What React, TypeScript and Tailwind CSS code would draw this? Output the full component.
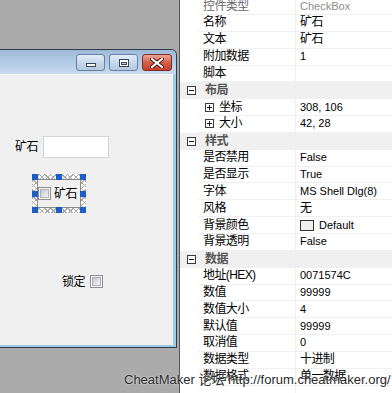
import React from "react";

type Row =
  | { kind: "cat"; label: string }
  | {
      kind: "prop";
      name: string;
      value?: string;
      sub?: boolean;
      readonly?: boolean;
      swatch?: boolean;
      cjk?: boolean;
    };

const rows: Row[] = [
  { kind: "prop", name: "控件类型", value: "CheckBox", readonly: true },
  { kind: "prop", name: "名称", value: "矿石", cjk: true },
  { kind: "prop", name: "文本", value: "矿石", cjk: true },
  { kind: "prop", name: "附加数据", value: "1" },
  { kind: "prop", name: "脚本", value: "" },
  { kind: "cat", label: "布局" },
  { kind: "prop", name: "坐标", value: "308, 106", sub: true },
  { kind: "prop", name: "大小", value: "42, 28", sub: true },
  { kind: "cat", label: "样式" },
  { kind: "prop", name: "是否禁用", value: "False" },
  { kind: "prop", name: "是否显示", value: "True" },
  { kind: "prop", name: "字体", value: "MS Shell Dlg(8)" },
  { kind: "prop", name: "风格", value: "无", cjk: true },
  { kind: "prop", name: "背景颜色", value: "Default", swatch: true },
  { kind: "prop", name: "背景透明", value: "False" },
  { kind: "cat", label: "数据" },
  { kind: "prop", name: "地址(HEX)", value: "0071574C" },
  { kind: "prop", name: "数值", value: "99999" },
  { kind: "prop", name: "数值大小", value: "4" },
  { kind: "prop", name: "默认值", value: "99999" },
  { kind: "prop", name: "取消值", value: "0" },
  { kind: "prop", name: "数据类型", value: "十进制", cjk: true },
  { kind: "prop", name: "数据格式", value: "单一数据", cjk: true },
  { kind: "prop", name: "", value: "" },
];

const FONT = { fontFamily: '"Liberation Sans", "Noto Sans CJK SC", sans-serif' };

function BoxIcon({ plus }: { plus?: boolean }) {
  return (
    <svg width="9" height="9" viewBox="0 0 9 9" className="shrink-0">
      <rect x="0.5" y="0.5" width="8" height="8" fill="#fff" stroke="#3a3a3a" />
      <line x1="2" y1="4.5" x2="7" y2="4.5" stroke="#1a1a1a" />
      {plus && <line x1="4.5" y1="2" x2="4.5" y2="7" stroke="#1a1a1a" />}
    </svg>
  );
}

function Win7Check() {
  return (
    <div className="w-[13px] h-[13px] border border-[#8e8f8f] bg-[#f6f6f6] p-[1px] shrink-0">
      <div className="w-full h-full border border-[#aeb2bb] bg-gradient-to-br from-[#c2c6d1] via-[#dcdee3] to-[#f6f6f6]" />
    </div>
  );
}

function PropRow({ r }: { r: Row }) {
  if (r.kind === "cat") {
    return (
      <div className="flex h-[16.85px] items-center bg-[#f0f0f0]">
        <div className="w-[18px] shrink-0 flex items-center pl-[7px]">
          <BoxIcon />
        </div>
        <div className="pl-[7px] text-[12px] font-bold text-[#555555] tracking-[-0.4px] leading-[15px]">
          {r.label}
        </div>
      </div>
    );
  }
  return (
    <div className="flex h-[16.85px]">
      <div className="w-[18px] shrink-0 bg-white" />
      <div
        className={`w-[98px] shrink-0 flex items-center border-b border-r border-[#f0f0f0] ${
          r.sub ? "pl-[7px]" : "pl-[5px]"
        } text-[12px] leading-[15px] tracking-[-0.6px] whitespace-nowrap overflow-hidden ${
          r.readonly ? "text-[#6a6a6a]" : "text-black"
        }`}
      >
        {r.sub && (
          <span className="mr-[5px] flex">
            <BoxIcon plus />
          </span>
        )}
        {r.name}
      </div>
      <div
        className={`flex-1 flex items-center border-b border-[#f0f0f0] pl-[4px] leading-[15px] whitespace-nowrap overflow-hidden ${
          r.cjk ? "text-[12px] tracking-[-0.6px]" : "text-[11px]"
        } ${r.readonly ? "text-[#8c8c8c]" : "text-black"}`}
      >
        {r.swatch && (
          <span className="w-[14px] h-[11px] border border-[#333] bg-[#f0f0f0] mr-[5px] shrink-0" />
        )}
        {r.value}
      </div>
    </div>
  );
}

function TitleButtons() {
  return (
    <div className="h-[24px] flex justify-end items-start pt-[4px] pr-[4px] gap-[4px] shrink-0 bg-gradient-to-b from-[#9fb9d7] via-[#b3cbe5] to-[#c8daee]">
      <div className="w-[29px] h-[17px] rounded-[3px] border border-[#62809f] bg-gradient-to-b from-[#e4edf8] via-[#c9d8ea] to-[#b4c8df] flex items-end justify-center pb-[3px]">
        <div className="w-[10px] h-[4px] bg-white border border-[#34475c]" />
      </div>
      <div className="w-[29px] h-[17px] rounded-[3px] border border-[#62809f] bg-gradient-to-b from-[#e4edf8] via-[#c9d8ea] to-[#b4c8df] flex items-center justify-center">
        <svg width="10" height="8" viewBox="0 0 10 8">
          <rect x="0.5" y="0.5" width="9" height="7" fill="#fff" stroke="#34475c" />
          <rect x="2.5" y="3.5" width="5" height="2" fill="#c9d8ea" stroke="#34475c" />
        </svg>
      </div>
      <div className="w-[30px] h-[17px] rounded-[3px] border border-[#7c2f22] bg-gradient-to-b from-[#eaa796] via-[#d45f48] to-[#c4402c] flex items-center justify-center">
        <svg width="14" height="10" viewBox="0 0 14 10">
          <path d="M2 1 L12 9 M12 1 L2 9" stroke="#4a1a10" strokeWidth="4" strokeLinecap="square" />
          <path d="M2 1 L12 9 M12 1 L2 9" stroke="#fff" strokeWidth="2" strokeLinecap="square" />
        </svg>
      </div>
    </div>
  );
}

function Handle({ cls }: { cls: string }) {
  return <div className={`absolute w-[6px] h-[6px] bg-[#1b5fc6] ${cls}`} />;
}

export default function App() {
  return (
    <div
      className="relative w-[392px] h-[393px] overflow-hidden flex bg-[#ababab]"
      style={FONT}
    >
      {/* designer canvas */}
      <div className="w-[179px] shrink-0 bg-[#ababab]">
        <div className="mt-[49px] w-[177px] h-[299px] border-t border-r border-b border-[#2c3b4d] rounded-tr-[6px] overflow-hidden flex flex-col bg-[#9fcde6]">
          <TitleButtons />
          <div className="relative flex-1 mr-[3px] mb-[2px] bg-[#f0f0f0] border-t border-[#f8f8f8] text-[12px] tracking-[-0.5px] text-black">
            <div className="absolute left-[15px] top-[65px] leading-[14px]">矿石</div>
            <div className="absolute left-[43px] top-[61px] w-[66px] h-[22px] bg-white border border-[#d4d4d4]" />
            <div className="absolute left-[32px] top-[99px] w-[54px] h-[39px] bg-white bg-[repeating-linear-gradient(45deg,#a8a8a8_0px,#a8a8a8_1px,transparent_1px,transparent_4px),repeating-linear-gradient(-45deg,#a8a8a8_0px,#a8a8a8_1px,transparent_1px,transparent_4px)]">
              <div className="absolute left-[5px] top-[5px] right-[5px] bottom-[5px] border border-[#8a8a8a] bg-[#f0f0f0] flex items-center">
                <Win7Check />
                <span className="ml-[3px] leading-[14px]">矿石</span>
              </div>
              <Handle cls="left-0 top-0" />
              <Handle cls="left-[24px] top-0" />
              <Handle cls="left-[48px] top-0" />
              <Handle cls="left-0 top-[17px]" />
              <Handle cls="left-[48px] top-[17px]" />
              <Handle cls="left-0 top-[33px]" />
              <Handle cls="left-[24px] top-[33px]" />
              <Handle cls="left-[48px] top-[33px]" />
            </div>
            <div className="absolute left-[62px] top-[200px] leading-[14px]">锁定</div>
            <div className="absolute left-[90px] top-[200px]">
              <Win7Check />
            </div>
          </div>
        </div>
      </div>

      {/* property grid */}
      <div className="flex-1 bg-white border-l border-[#555]">
        <div className="mt-[-1.85px] flex flex-col">
          {rows.map((r, i) => (
            <PropRow key={i} r={r} />
          ))}
        </div>
      </div>

      {/* watermark */}
      <div className="absolute left-[124px] top-[372px] text-[13px] leading-[16px] whitespace-nowrap text-[#2a2a2a] [text-shadow:0_0_2px_#ffffff]">
        CheatMaker 论坛 http://forum.cheatmaker.org/
      </div>
    </div>
  );
}
